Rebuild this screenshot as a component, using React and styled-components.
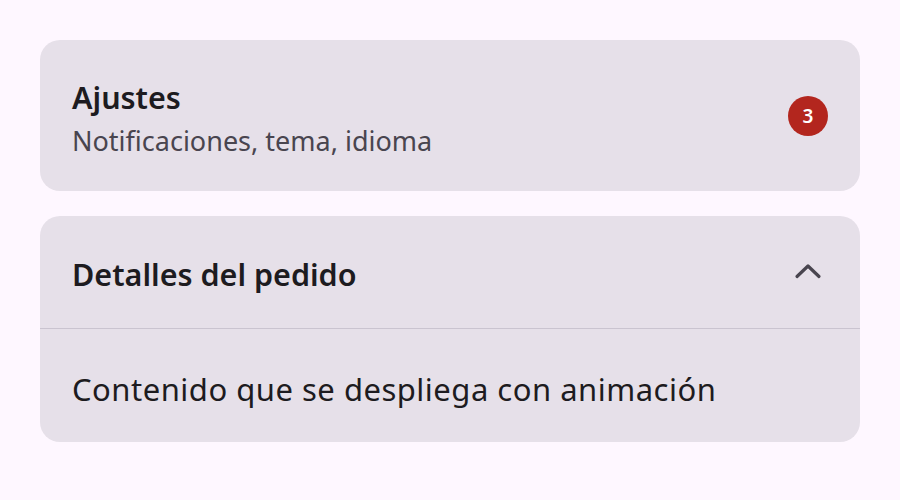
import React from 'react';
import styled, {createGlobalStyle} from 'styled-components';

const GlobalStyle = createGlobalStyle`
  html, body {
    margin: 0;
    padding: 0;
    background: #fef7ff;
  }
  body {
    font-family: "Noto Sans", "Open Sans", sans-serif;
    color: #1d1b20;
  }
`

const Page = styled.div`
  display: flex;
  flex-direction: column;
  gap: 25px;
  padding: 40px;
  width: 820px;
`

const Card = styled.div`
  background: #e6e0e9;
  border-radius: 20px;
  overflow: hidden;
`

const Row = styled.div`
  box-sizing: border-box;
  display: flex;
  align-items: center;
  justify-content: space-between;
  height: ${props => props.height}px;
  padding: ${props => props.$pt || 0}px 32px 0;
`

const TextStack = styled.div`
  display: flex;
  flex-direction: column;
  gap: 8px;
  margin-top: 6px;
`

const Title = styled.div`
  font-size: 30.5px;
  font-weight: 600;
  line-height: 36px;
  color: #1d1b20;
`

const Subtitle = styled.div`
  font-size: 27px;
  line-height: 36px;
  color: #49454f;
`

const Badge = styled.span`
  display: inline-flex;
  align-items: center;
  justify-content: center;
  width: 40px;
  height: 40px;
  border-radius: 50%;
  background: #b3261e;
  color: #fff;
  font-size: 19px;
  font-weight: 600;
`

const Divider = styled.div`
  height: 1px;
  background: #cac4d0;
`

const Body = styled.div`
  font-size: 31px;
  line-height: 36px;
  letter-spacing: 0.5px;
  color: #1d1b20;
`

const ChevronIcon = styled.svg`
  margin: -6px 6px 0 0;
`

const Chevron = () => (
  <ChevronIcon width="28" height="16" viewBox="0 0 28 16">
    <path d="M3 13.5 L14 3 L25 13.5" fill="none" stroke="#49454f" strokeWidth="3.2" strokeLinecap="round" strokeLinejoin="round"/>
  </ChevronIcon>
)

const App = () => {
  return(
    <Page>
      <GlobalStyle/>
      <Card>
        <Row height={151}>
          <TextStack>
            <Title>Ajustes</Title>
            <Subtitle>Notificaciones, tema, idioma</Subtitle>
          </TextStack>
          <Badge>3</Badge>
        </Row>
      </Card>
      <Card>
        <Row height={112} $pt={3}>
          <Title>Detalles del pedido</Title>
          <Chevron/>
        </Row>
        <Divider/>
        <Row height={113} $pt={6}>
          <Body>Contenido que se despliega con animación</Body>
        </Row>
      </Card>
    </Page>
  )
}

export default App;
